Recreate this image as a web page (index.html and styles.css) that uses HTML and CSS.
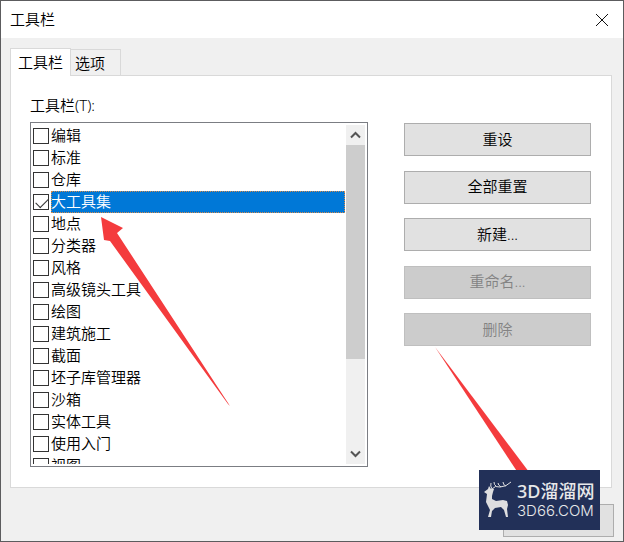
FILE: index.html
```html
<!DOCTYPE html>
<html lang="zh-CN">
<head>
<meta charset="utf-8">
<title>工具栏</title>
<link rel="stylesheet" href="styles.css">
</head>
<body>
<main class="dialog">
  <header class="titlebar">
    <h1>工具栏</h1>
    <button class="close" type="button" aria-label="关闭"><svg width="14" height="14" viewBox="0 0 14 14"><path d="M1 1 13 13M13 1 1 13"/></svg></button>
  </header>
  <div class="content">
    <div class="tabs" role="tablist">
      <button class="tab active" type="button" role="tab" aria-selected="true">工具栏</button>
      <button class="tab" type="button" role="tab" aria-selected="false">选项</button>
    </div>
    <section class="panel">
      <div class="toolbars">
        <h2 id="list-label">工具栏(T):</h2>
        <div class="listbox" role="group" aria-labelledby="list-label">
          <div class="items">
            <label class="item"><input type="checkbox"><span>编辑</span></label>
            <label class="item"><input type="checkbox"><span>标准</span></label>
            <label class="item"><input type="checkbox"><span>仓库</span></label>
            <label class="item selected"><input type="checkbox" checked><span>大工具集</span></label>
            <label class="item"><input type="checkbox"><span>地点</span></label>
            <label class="item"><input type="checkbox"><span>分类器</span></label>
            <label class="item"><input type="checkbox"><span>风格</span></label>
            <label class="item"><input type="checkbox"><span>高级镜头工具</span></label>
            <label class="item"><input type="checkbox"><span>绘图</span></label>
            <label class="item"><input type="checkbox"><span>建筑施工</span></label>
            <label class="item"><input type="checkbox"><span>截面</span></label>
            <label class="item"><input type="checkbox"><span>坯子库管理器</span></label>
            <label class="item"><input type="checkbox"><span>沙箱</span></label>
            <label class="item"><input type="checkbox"><span>实体工具</span></label>
            <label class="item"><input type="checkbox"><span>使用入门</span></label>
            <label class="item"><input type="checkbox"><span>视图</span></label>
          </div>
          <div class="scrollbar">
            <button type="button" class="scroll-button" aria-label="向上滚动"><svg width="11" height="8" viewBox="0 0 11 8"><path d="M1 6.500 5.500 2 10 6.500"/></svg></button>
            <div class="thumb"></div>
            <button type="button" class="scroll-button" aria-label="向下滚动"><svg width="11" height="8" viewBox="0 0 11 8"><path d="M1 1.500 5.500 6 10 1.500"/></svg></button>
          </div>
        </div>
      </div>
      <div class="actions">
        <button class="button" type="button">重设</button>
        <button class="button" type="button">全部重置</button>
        <button class="button" type="button">新建...</button>
        <button class="button" type="button" disabled>重命名...</button>
        <button class="button" type="button" disabled>删除</button>
      </div>
    </section>
    <footer class="footer"><button class="button confirm" type="button" aria-label="关闭"></button></footer>
  </div>
  <svg class="arrow to-item" width="134" height="194" viewBox="0 0 134 194"><path d="M3 3 25 14 19 19 132 192 130 190 12 27 6 26Z"/></svg>
  <svg class="arrow to-button" width="102" height="136" viewBox="0 0 102 136"><path d="M1 1 98 130 90 136Z"/></svg>
  <div class="brand">
    <svg class="deer" width="30" height="38" viewBox="0 0 30 38">
      <path class="body" d="M1 11 5 8 6 5 8 8 11 8 10 11 9 15 9 18 13 20 20 19 24 20 25 24 24 28 25 36 23 36 21 29 18 26 12 27 9 30 8 36 5 36 7 29 5 25 3 21 4 13Z"/>
      <path class="antler" d="M9 8Q7 5 8 2M9 8Q12 4 17 6Q23 6 28 1M13 5Q11 4 11 1M18 6Q15 4 15 2M23 5Q20 4 20 1"/>
    </svg>
    <div class="brand-text"><span class="brand-name">3D溜溜网</span><span class="brand-url">3D66.COM</span></div>
  </div>
</main>
</body>
</html>
```
FILE: styles.css
```css
* { box-sizing: border-box; }

body {
  margin: 0;
  color: #000;
  font: 350 15px/20px "Noto Sans", "Noto Sans CJK SC", sans-serif;
}

button {
  margin: 0;
  padding: 0;
  color: inherit;
  font: inherit;
}

h1, h2 {
  margin: 0;
  font: inherit;
}

svg {
  display: block;
  fill: none;
}

.dialog {
  position: relative;
  display: flex;
  flex-direction: column;
  min-height: 100vh;
  border: 1px solid #5c5c5e;
  background: #f0f0f0;
}

.titlebar {
  display: flex;
  align-items: center;
  justify-content: space-between;
  height: 37px;
  padding: 0 14px 0 9px;
  background: #fff;
}

.titlebar h1 { padding-bottom: 2px; }

.close {
  border: 0;
  background: none;
}

.close svg { stroke: #111; }

.content { padding: 10px 11px 0 9px; }

.tabs {
  display: flex;
  align-items: flex-end;
}

.tab {
  height: 26px;
  padding: 0 15px 0 4px;
  border: 1px solid #d9d9d9;
  border-width: 1px 1px 0 0;
  background: #f0f0f0;
}

.tab.active {
  z-index: 1;
  height: 28px;
  margin-bottom: -1px;
  padding: 0 7px 2px;
  border-left-width: 1px;
  background: #fff;
}

.panel {
  display: flex;
  gap: 36px;
  padding: 19px 20px 20px 19px;
  border: 1px solid #d9d9d9;
  background: #fff;
}

.toolbars {
  flex: 1;
  min-width: 0;
}

.listbox {
  display: flex;
  height: 345px;
  margin-top: 7px;
  padding: 2px;
  border: 1px solid #7b7d83;
}

.items {
  flex: 1;
  overflow: hidden;
}

.item {
  display: flex;
  align-items: center;
  height: 22px;
}

.item input {
  flex: none;
  appearance: none;
  width: 16px;
  height: 16px;
  margin: 0 2px 0 0;
  border: 1px solid #333;
  background: #fff;
}

.item input:checked::before {
  content: "";
  display: block;
  width: 11px;
  height: 6px;
  margin: 3px 0 0 2px;
  border: solid #333;
  border-width: 0 0 1px 1px;
  transform: rotate(-45deg);
}

.item span {
  flex: 1;
  height: 22px;
  margin-right: 1px;
}

.selected span {
  outline: 1px dotted #d58a4b;
  outline-offset: -1px;
  background: #0078d7;
  color: #fff;
}

.scrollbar {
  display: flex;
  flex-direction: column;
  width: 19px;
  background: #f0f0f0;
}

.scroll-button {
  display: grid;
  place-items: center;
  height: 20px;
  border: 0;
  background: #f0f0f0;
}

.scroll-button svg {
  stroke: #555;
  stroke-width: 2;
}

.thumb {
  height: 214px;
  margin-bottom: auto;
  background: #cdcdcd;
}

.actions {
  display: flex;
  flex-direction: column;
  justify-content: space-between;
  width: 187px;
  height: 251px;
  padding-top: 28px;
}

.button {
  height: 33px;
  padding-bottom: 2px;
  border: 1px solid #adadad;
  background: #e1e1e1;
}

.button:disabled {
  border-color: #bfbfbf;
  background: #ccc;
  color: #838383;
}

.footer {
  display: flex;
  justify-content: flex-end;
  margin-right: -2px;
  padding-top: 16px;
}

.confirm { width: 111px; }

.arrow {
  position: absolute;
  fill: #f43b3d;
  pointer-events: none;
}

.to-item {
  top: 213px;
  left: 97px;
}

.to-button {
  top: 345px;
  left: 433px;
}

.brand {
  position: absolute;
  right: 23px;
  bottom: 11px;
  display: flex;
  align-items: center;
  gap: 4px;
  width: 121px;
  height: 60px;
  padding-left: 4px;
  background: #223058;
  color: #e8e8ea;
}

.body { fill: #dedee0; }
.antler { stroke: #dedee0; }

.brand-text {
  display: flex;
  flex-direction: column;
  white-space: nowrap;
}

.brand-name {
  font-weight: 500;
  font-size: 18px;
  line-height: 22px;
}

.brand-url {
  font: 300 15px/18px Inter, sans-serif;
}
```
